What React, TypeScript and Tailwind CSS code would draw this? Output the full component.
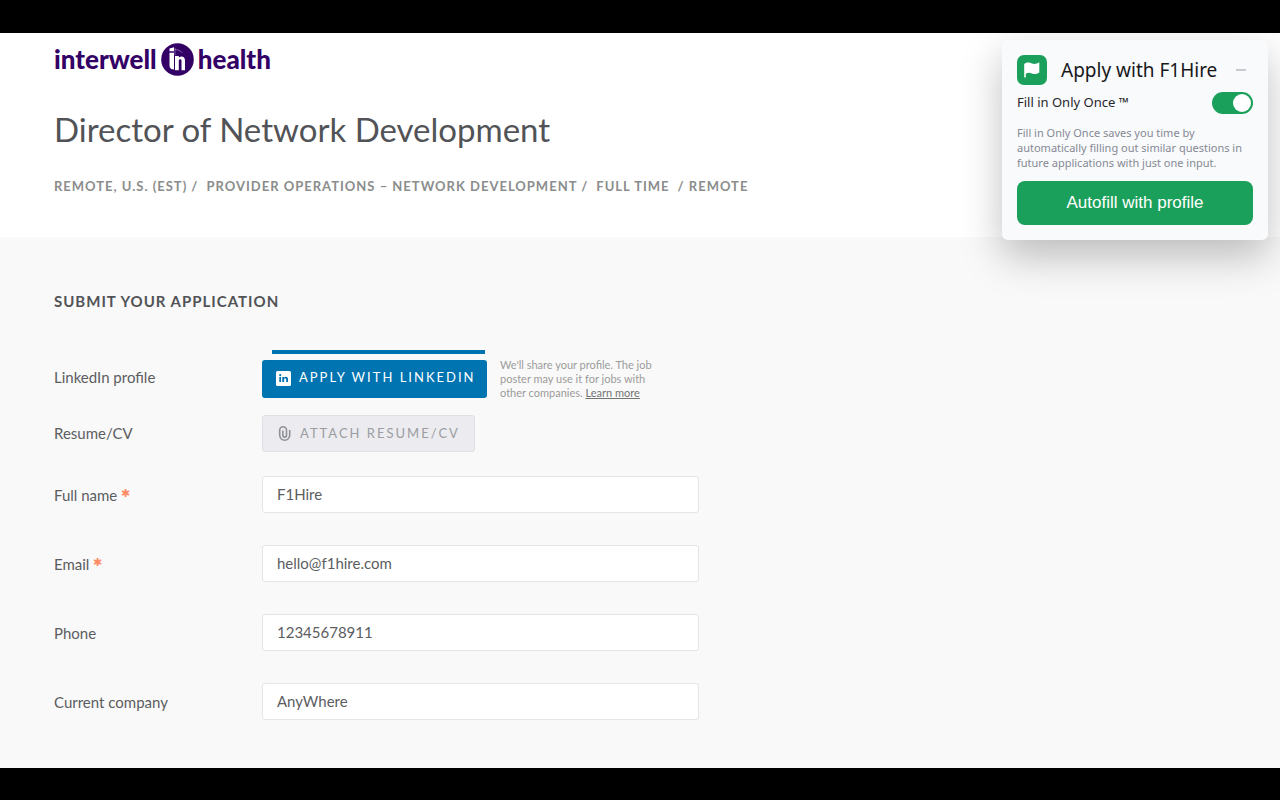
import { useState } from "react";

interface Field {
  id: string;
  label: string;
  type: string;
  value: string;
  required?: boolean;
}

const FIELDS: Field[] = [
  { id: "name", label: "Full name", type: "text", value: "F1Hire", required: true },
  { id: "email", label: "Email", type: "email", value: "hello@f1hire.com", required: true },
  { id: "phone", label: "Phone", type: "tel", value: "12345678911" },
  { id: "company", label: "Current company", type: "text", value: "AnyWhere" },
];

function Logo() {
  return (
    <a
      href="#"
      aria-label="interwell health"
      className="flex h-9 w-fit items-center gap-1 text-[26px] leading-9 font-black text-[#330066]"
    >
      <span>interwell</span>
      <svg width="33" height="33" viewBox="0 0 33 33" className="shrink-0" aria-hidden="true">
        <circle cx="16.5" cy="16.5" r="16.3" fill="#330066" />
        <path d="M8.500 5.500l4.500-1.300v4H8.500z" fill="#fff" />
        <path
          d="M14 4.800v7.500M14 6.500c3 0 6 1.500 7.500 3.500"
          fill="none"
          stroke="#fff"
          strokeOpacity="0.45"
          strokeWidth="0.8"
        />
        <path d="M8.500 9.800H13v16.800c-3 0-4.500-1.400-4.500-4.300z" fill="#fff" />
        <path
          d="M14 13h3.800v1.600c2.500-2.200 6.200-1.300 6.200 2.800v9.800h-3.500v-9.400c0-1.800-1.900-1.900-2.700-.7v10.100H14z"
          fill="#fff"
        />
      </svg>
      <span>health</span>
    </a>
  );
}

function JobHeader() {
  return (
    <header className="h-[204px] bg-white px-[54px] pt-2">
      <Logo />
      <h1 className="mt-[31px] text-[33px] leading-[42px] text-[#515357]">
        Director of Network Development
      </h1>
      <div className="mt-[26px] flex gap-2 text-[13px] leading-5 font-bold tracking-[1px] whitespace-nowrap text-[#8a8d8c]">
        <span>REMOTE, U.S. (EST) /</span>
        <span>PROVIDER OPERATIONS – NETWORK DEVELOPMENT /</span>
        <span>FULL TIME</span>
        <span>/ REMOTE</span>
      </div>
    </header>
  );
}

function LinkedInIcon() {
  return (
    <svg width="15" height="15" viewBox="0 0 15 15" className="shrink-0" aria-hidden="true">
      <rect width="15" height="15" rx="1.5" fill="#fff" />
      <circle cx="4.2" cy="4.1" r="1.1" fill="#0073b1" />
      <path
        d="M3.300 6h1.800v5H3.300zM6.300 6H8v.8c1-1.500 4-1.300 4 1.300V11h-1.800V8.500c0-1.500-2.100-1.400-2.100 0V11H6.300z"
        fill="#0073b1"
      />
    </svg>
  );
}

function PaperclipIcon() {
  return (
    <svg
      width="15"
      height="15"
      viewBox="0 0 15 15"
      fill="none"
      stroke="#8f9196"
      strokeWidth="1.6"
      className="shrink-0"
      aria-hidden="true"
    >
      <path d="M12.700 4v5.200a5 5 0 0 1-10 0V4.200a3.400 3.400 0 0 1 6.800 0v5.100a1.800 1.800 0 0 1-3.600 0V4.500" />
    </svg>
  );
}

function ApplicationForm() {
  return (
    <main className="grow bg-[#f9f9f9] px-[54px] pt-[53px] pb-[47px] text-[15px] text-[#5b5d61]">
      <h2 className="leading-[22px] font-bold tracking-[1px] text-[#515357]">
        SUBMIT YOUR APPLICATION
      </h2>

      <form className="mt-[38px]">
        {/* LinkedIn */}
        <div className="grid grid-cols-[208px_minmax(0,437px)]">
          <span className="pt-4 leading-[22px]">LinkedIn profile</span>
          <div className="flex gap-[13px]">
            <div className="w-[225px] shrink-0">
              <div className="mr-0.5 ml-2.5 h-1 bg-[#0073b1]" />
              <button
                type="button"
                className="mt-1.5 flex h-[38px] w-full items-center gap-2 rounded-[3px] bg-[#0073b1] pb-0.5 pl-3.5 text-[13px] tracking-[2px] whitespace-nowrap text-white"
              >
                <LinkedInIcon />
                APPLY WITH LINKEDIN
              </button>
            </div>
            <p className="w-[160px] pt-2 text-[11px] leading-[14px] text-[#9b9b9b]">
              We'll share your profile. The job poster may use it for jobs with other companies.{" "}
              <a href="#" className="text-[#737373] underline">
                Learn more
              </a>
            </p>
          </div>
        </div>

        {/* Resume */}
        <div className="mt-[15px] grid grid-cols-[208px_minmax(0,437px)] items-center">
          <span className="pb-0.5 leading-[22px]">Resume/CV</span>
          <button
            type="button"
            className="flex h-[37px] w-[213px] items-center gap-2 rounded-[3px] border border-[#e0e0e4] bg-[#ebebf0] pl-3.5 text-[13px] tracking-[2px] whitespace-nowrap text-[#9c9da1]"
          >
            <PaperclipIcon />
            ATTACH RESUME/CV
          </button>
        </div>

        {/* Text fields */}
        <div className="mt-6 flex flex-col gap-8">
          {FIELDS.map((field) => (
            <div key={field.id} className="grid grid-cols-[208px_minmax(0,437px)] items-center">
              <label htmlFor={field.id} className="flex items-center leading-[22px]">
                {field.label}
                {field.required && (
                  <span className="ml-1 pb-1 text-[11px] leading-[18px] text-[#ff8a65]">✱</span>
                )}
              </label>
              <input
                id={field.id}
                type={field.type}
                defaultValue={field.value}
                required={field.required}
                className="h-[37px] w-full rounded-[3px] border border-[#e5e5e5] bg-white px-3.5 pb-0.5 text-[#5b5d61] outline-none"
              />
            </div>
          ))}
        </div>
      </form>
    </main>
  );
}

function AutofillPanel() {
  const [fillOnce, setFillOnce] = useState(true);

  return (
    <aside className="absolute top-10 right-3 w-[266px] rounded-md bg-[#f9fafc] p-[15px] font-['Noto_Sans',sans-serif] shadow-[0_16px_40px_rgba(0,0,0,0.25)]">
      <div className="flex items-center">
        <svg width="30" height="30" viewBox="0 0 30 30" className="shrink-0" aria-hidden="true">
          <rect width="30" height="30" rx="7" fill="#1aa05a" />
          <path
            d="M7.200 9c2.800-1.900 5.400-1.600 7.700-.6 2.300.9 4.700.6 7.400-1.200v10.300c-2.700 1.900-5.200 1.900-7.500.9-2-.8-3.900-.7-6 .3V22c0 .7-1.600.7-1.600 0z"
            fill="#fff"
          />
        </svg>
        <h2 className="ml-3.5 text-[19px] leading-[30px] whitespace-nowrap text-[#18181b]">Apply with F1Hire</h2>
        <button type="button" aria-label="Minimize" className="ml-auto flex h-5 w-6 items-center justify-center">
          <span className="h-0.5 w-2.5 bg-[#c8cad2]" />
        </button>
      </div>

      <label className="mt-[7px] flex h-[22px] items-center justify-between text-[13px] text-[#27272a]">
        Fill in Only Once ™
        <input
          type="checkbox"
          role="switch"
          checked={fillOnce}
          onChange={(e) => setFillOnce(e.target.checked)}
          className="flex h-[22px] w-[41px] appearance-none items-center rounded-full bg-zinc-300 px-0.5 before:size-[18px] before:rounded-full before:bg-white checked:justify-end checked:bg-[#1aa05a]"
        />
      </label>

      <p className="mt-[11px] text-[11px] leading-[15px] text-[#858994]">
        Fill in Only Once saves you time by automatically filling out similar questions in future applications with just one input.
      </p>

      <button
        type="button"
        className="mt-[11px] h-11 w-full rounded-lg bg-[#1aa05a] font-['Liberation_Sans',Arial,sans-serif] text-[17px] text-white"
      >
        Autofill with profile
      </button>
    </aside>
  );
}

export default function App() {
  return (
    <div className="flex min-h-screen flex-col bg-black pt-[33px] pb-8 font-['Lato',sans-serif]">
      <JobHeader />
      <ApplicationForm />
      <AutofillPanel />
    </div>
  );
}
